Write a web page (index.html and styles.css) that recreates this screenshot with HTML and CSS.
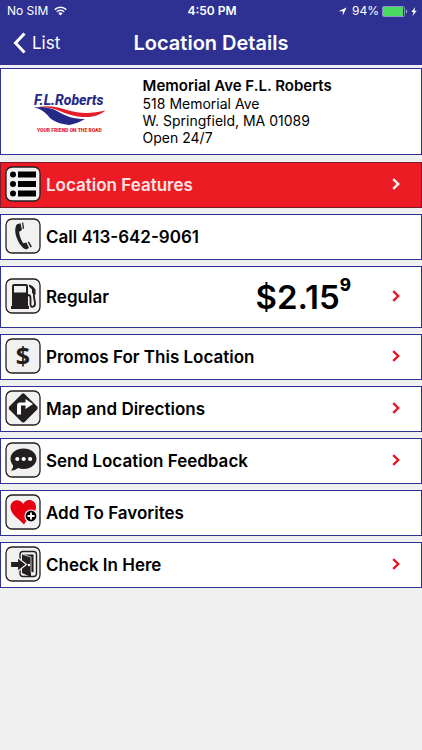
FILE: index.html
```html
<!DOCTYPE html>
<html lang="en">
<head>
<meta charset="utf-8">
<meta name="viewport" content="width=device-width, initial-scale=1">
<title>Location Details</title>
<link rel="stylesheet" href="styles.css">
</head>
<body>
<header class="top">
  <div class="status">
    <div class="status-left">
      <span>No SIM</span>
      <svg class="wifi" viewBox="0 0 13 10" aria-hidden="true"><path d="M.8 3.600a8.200 8.200 0 0 1 11.400 0M2.800 5.700a5.300 5.300 0 0 1 7.400 0" fill="none" stroke="currentColor" stroke-width="1.500"/><path d="M6.500 9.600 4.300 7.300a3.200 3.200 0 0 1 4.400 0z" fill="currentColor"/></svg>
    </div>
    <span class="clock">4:50 PM</span>
    <div class="status-right">
      <svg class="arrow" viewBox="0 0 9 9" aria-hidden="true"><path d="M8.600.4 4.800 8.600V4.200H.4z" fill="currentColor"/></svg>
      <span>94%</span>
      <svg class="battery" viewBox="0 0 26 11" aria-hidden="true"><rect x=".5" y=".5" width="22" height="10" rx="1" fill="#2e3192" stroke="#8f92cc"/><rect x="1" y="1" width="20" height="9" fill="#4cd964"/><path d="M24 3.500q2 2 0 4z" fill="#d5d6ef"/></svg>
      <svg class="bolt" viewBox="0 0 6 9" aria-hidden="true"><path d="M4.200 0 .3 5h2.200L1.500 9 5.700 3.800H3.400z" fill="currentColor"/></svg>
    </div>
  </div>
  <nav class="bar">
    <a class="back" href="#"><svg viewBox="0 0 13 22" aria-hidden="true"><path d="M11.500 1.500 2.500 11l9 9.500" fill="none" stroke="currentColor" stroke-width="3"/></svg>List</a>
    <h1>Location Details</h1>
  </nav>
</header>
<main>
  <section class="card place">
    <div class="logo">
      <svg viewBox="0 0 76 44" role="img" aria-label="F.L. Roberts, your friend on the road">
        <text class="brand" x="2" y="15">F.L.Roberts</text>
        <path d="M2 17.500c9-1.500 17 0 24 4 8 5 16 7.500 27 7.500-5 3-10 5-16 6-8-1-14-3-19-7-4-5-8-9-16-10.500z" fill="#252a87"/>
        <path d="M7 16.800c10-1.500 19 .2 28 3.200 12 3.500 24 4 38.500.5-5 4-11 6.500-18.500 6.500-10 0-18-2-26-5.500-7-3-14-4.500-22-4.700z" fill="#e51c2a"/>
        <text class="slogan" x="5" y="42">YOUR FRIEND ON THE ROAD</text>
      </svg>
    </div>
    <address>
      <strong>Memorial Ave F.L. Roberts</strong>
      <span>518 Memorial Ave</span>
      <span>W. Springfield, MA 01089</span>
      <span>Open 24/7</span>
    </address>
  </section>

  <a class="card row features" href="#">
    <svg class="icon" viewBox="0 0 36 36" aria-hidden="true"><rect class="tile" x="1" y="1" width="34" height="34" rx="6"/><g fill="#000"><circle cx="8" cy="8.500" r="3"/><circle cx="8" cy="18" r="3"/><circle cx="8" cy="27.500" r="3"/><path d="M13 5.500h18v6H13zM13 15h18v6H13zM13 24.500h18v6H13z"/></g></svg>
    <span class="label">Location Features</span>
    <svg class="chevron" viewBox="0 0 8 12" aria-hidden="true"><path d="m1.200 1.200 5 4.800-5 4.800"/></svg>
  </a>
  <a class="card row" href="tel:4136429061">
    <svg class="icon" viewBox="0 0 36 36" aria-hidden="true"><rect class="tile" x="1" y="1" width="34" height="34" rx="6"/><path class="ink" d="M15.500 5.300 12 6.300c-2.200 2.500-2.300 8-.4 13.200 2 5.500 5.500 10.800 9.400 12l3-1.600-2.600-5.400-3 .8c-2-2.300-4.200-8.300-4.200-11.600l2.800-1.600zM17 4.800l1.200-.4.9 6-1.300.7zM22.700 24.200l1.200-.8 3 5-1.300 1z"/></svg>
    <span class="label">Call 413-642-9061</span>
  </a>
  <a class="card row fuel" href="#">
    <svg class="icon" viewBox="0 0 36 36" aria-hidden="true"><rect class="tile" x="1" y="1" width="34" height="34" rx="6"/><path class="ink" fill-rule="evenodd" d="M9 6h12q2 0 2 2v20h1v3H6v-3h1V8q0-2 2-2zm0 2v6.500h12V8z"/><path d="M23 17c2 0 2.500 1 2.500 3v6.500c0 4 5 2.500 4.500-1.500-.6-4-1.200-6-1.200-9V12" fill="none" stroke="#231f20" stroke-width="1.800"/><path class="ink" d="m24 6.500 3.500 1.500 3 3.500V17l-3.500-2v-3.500l-3-3z"/></svg>
    <span class="label">Regular</span>
    <span class="price">$2.15<sup>9</sup></span>
    <svg class="chevron" viewBox="0 0 8 12" aria-hidden="true"><path d="m1.200 1.200 5 4.800-5 4.800"/></svg>
  </a>
  <a class="card row" href="#">
    <svg class="icon" viewBox="0 0 36 36" aria-hidden="true"><rect class="tile" x="1" y="1" width="34" height="34" rx="6"/><text class="dollar" x="18" y="27">$</text></svg>
    <span class="label">Promos For This Location</span>
    <svg class="chevron" viewBox="0 0 8 12" aria-hidden="true"><path d="m1.200 1.200 5 4.800-5 4.800"/></svg>
  </a>
  <a class="card row" href="#">
    <svg class="icon" viewBox="0 0 36 36" aria-hidden="true"><rect class="tile" x="1" y="1" width="34" height="34" rx="6"/><path class="ink" d="M16.800 3.900q1.400-1.200 2.800 0l12.500 12.500q1.300 1.600 0 3.200L19.600 32q-1.400 1.200-2.800 0L4.300 19.600q-1.300-1.600 0-3.200z"/><path d="M12 24.500V15.500q0-3 3-3h5.500V9l7.500 5-7.500 5v-3.500H16v9z" fill="#fff"/></svg>
    <span class="label">Map and Directions</span>
    <svg class="chevron" viewBox="0 0 8 12" aria-hidden="true"><path d="m1.200 1.200 5 4.800-5 4.800"/></svg>
  </a>
  <a class="card row" href="#">
    <svg class="icon" viewBox="0 0 36 36" aria-hidden="true"><rect class="tile" x="1" y="1" width="34" height="34" rx="6"/><path class="ink" d="M18.500 6.500c7.500 0 13 4.500 13 10.300S26 27 18.500 27c-2 0-3.800-.3-5.500-1-2 1.800-4.500 2.600-7.200 2.500 1.700-1.500 2.300-3 2.300-5C6.500 21.600 5.500 19.400 5.500 16.800c0-5.800 5.500-10.300 13-10.300z"/><g fill="#fff"><circle cx="12.300" cy="17" r="2.100"/><circle cx="18.700" cy="17" r="2.100"/><circle cx="25.100" cy="17" r="2.100"/></g></svg>
    <span class="label">Send Location Feedback</span>
    <svg class="chevron" viewBox="0 0 8 12" aria-hidden="true"><path d="m1.200 1.200 5 4.800-5 4.800"/></svg>
  </a>
  <a class="card row" href="#">
    <svg class="icon" viewBox="0 0 36 36" aria-hidden="true"><rect class="tile" x="1" y="1" width="34" height="34" rx="6"/><path d="M19 30.500C15 25.500 5.500 21 5.500 13c0-7 9-9.500 12.800-3 3-6.500 12.700-4.500 12.700 3 0 7-8.500 11-12 17.500z" fill="#e60012"/><circle cx="26" cy="22" r="6" fill="#000" stroke="#f1f1f2" stroke-width="1.200"/><path d="M26 18.500v7M22.500 22h7" stroke="#fff" stroke-width="1.800"/></svg>
    <span class="label">Add To Favorites</span>
  </a>
  <a class="card row" href="#">
    <svg class="icon" viewBox="0 0 36 36" aria-hidden="true"><rect class="tile" x="1" y="1" width="34" height="34" rx="6"/><rect x="15" y="5.500" width="16.500" height="25" rx="3" fill="none" stroke="#231f20" stroke-width="1.400"/><path class="ink" d="M17 8.500h11.500v18H26V31l-9-4z"/><path d="m18 8.500 8 2.500v15.500h2.500" fill="none" stroke="#f1f1f2" stroke-width=".8"/><circle cx="24" cy="19" r="1.200" fill="#fff"/><path class="ink" d="M5.500 15.500h7V11.500l9 7-9 7v-4h-7z" stroke="#f1f1f2" stroke-width="1.200"/></svg>
    <span class="label">Check In Here</span>
    <svg class="chevron" viewBox="0 0 8 12" aria-hidden="true"><path d="m1.200 1.200 5 4.800-5 4.800"/></svg>
  </a>
</main>
</body>
</html>
```
FILE: styles.css
```css
* {
  box-sizing: border-box;
}

body {
  margin: 0;
  background: #f0f0f0;
  color: #000;
  font-family: Inter, "Liberation Sans", sans-serif;
}

a {
  color: inherit;
  text-decoration: none;
}

svg {
  display: block;
  flex: none;
}

.top {
  background: #2e3192;
  color: #fff;
}

.status {
  display: grid;
  grid-template-columns: 1fr auto 1fr;
  align-items: center;
  height: 22px;
  padding: 0 5px 0 7px;
  font-size: 12px;
  line-height: 22px;
}

.status-left,
.status-right {
  display: flex;
  align-items: center;
  gap: 6px;
}

.status-right {
  justify-content: flex-end;
  gap: 3px;
}

.clock {
  font-weight: 600;
}

.wifi {
  width: 13px;
  height: 10px;
}

.arrow {
  width: 9px;
  height: 9px;
  margin-right: 2px;
}

.battery {
  width: 26px;
  height: 11px;
}

.bolt {
  width: 6px;
  height: 9px;
}

.bar {
  display: grid;
  grid-template-columns: 1fr auto 1fr;
  align-items: center;
  height: 43px;
  padding: 0 13px 2px;
}

.back {
  display: flex;
  align-items: center;
  gap: 6px;
  font-size: 17px;
}

.back svg {
  width: 13px;
  height: 22px;
}

h1 {
  margin: 0;
  font-size: 20px;
  font-weight: 600;
  line-height: 40px;
}

main {
  display: flex;
  flex-direction: column;
  gap: 6px;
  padding-top: 3px;
}

.card {
  display: flex;
  align-items: center;
  border: 1px solid #2e3192;
  background: #fff;
}

.place {
  margin-bottom: 1px;
  padding: 8px 0;
}

.logo {
  display: flex;
  justify-content: center;
  flex: 0 0 33%;
}

.logo svg {
  width: 76px;
  height: 44px;
  overflow: visible;
}

.brand {
  fill: #252a87;
  font: italic 800 14px Roboto, sans-serif;
}

.slogan {
  fill: #e51c2a;
  font: 900 5px Roboto, sans-serif;
}

address {
  display: flex;
  flex-direction: column;
  padding-left: 3px;
  font-size: 14px;
  font-style: normal;
  line-height: 17px;
}

address strong {
  font-size: 15px;
  font-weight: 600;
  line-height: 18px;
}

.row {
  min-height: 46px;
  padding: 0 21px 0 4px;
  gap: 5px;
  font-size: 17px;
  font-weight: 600;
}

.features {
  border-color: #7a1c2c;
  background: #ed1c24;
  color: #fce4e5;
}

.fuel {
  min-height: 62px;
}

.icon {
  width: 36px;
  height: 36px;
  margin-bottom: 2px;
}

.tile {
  fill: #f1f1f2;
  stroke: #231f20;
  stroke-width: 1.3;
}

.ink {
  fill: #231f20;
}

.dollar {
  fill: #231f20;
  font: 700 25px "Open Sans", sans-serif;
  text-anchor: middle;
}

.label {
  flex: 1;
}

.price {
  margin-right: 36px;
  font-size: 33px;
  line-height: 40px;
}

.price sup {
  font-size: 17px;
  font-weight: 800;
  line-height: 0;
  vertical-align: 18px;
}

.chevron {
  width: 8px;
  height: 12px;
  margin-bottom: 2px;
  fill: none;
  stroke: #e01b22;
  stroke-width: 2.4;
}

.features .chevron {
  stroke: #fff;
}
```
